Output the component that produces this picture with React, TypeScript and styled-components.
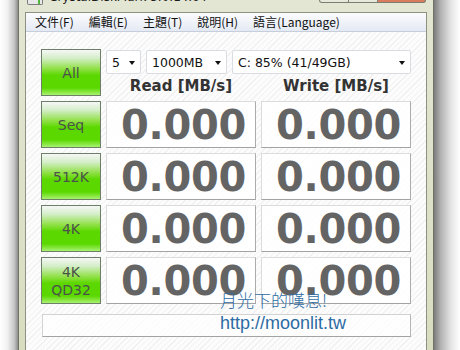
import { Fragment } from "react";
import styled, { createGlobalStyle } from "styled-components";

const GlobalStyle = createGlobalStyle`
  html, body {
    margin: 0;
    padding: 0;
    background: #ffffff;
    overflow: hidden;
  }
`;

const Screen = styled.div`
  position: relative;
  width: 460px;
  height: 350px;
  display: flex;
  overflow: hidden;
  font-family: "DejaVu Sans", sans-serif;
`;

const Shadow = styled.div<{ side: "left" | "right" }>`
  width: ${({ side }) => (side === "left" ? 18 : 26)}px;
  background: ${({ side }) =>
    side === "left"
      ? "linear-gradient(to right, #ffffff 0%, #f2f2f2 40%, #c4c4c4 80%, #8c8c8c 100%)"
      : "linear-gradient(to right, #7c7c7c 0%, #b0b0b0 25%, #e4e4e4 65%, #ffffff 100%)"};
`;

const Window = styled.div`
  width: 416px;
  box-sizing: border-box;
  border-left: 1px solid #6f7366;
  border-right: 1px solid #6f7366;
  background: linear-gradient(to bottom, #e3e6d2, #d9ddc0);
  padding: 0 6px;
  display: flex;
  flex-direction: column;
`;

const TitleBar = styled.div`
  height: 12px;
  display: flex;
  align-items: flex-start;
  overflow: hidden;
`;

const AppIcon = styled.div`
  width: 14px;
  height: 4px;
  margin-left: 2px;
  border: 1px solid #7d7d7d;
  border-top: none;
  border-radius: 0 0 2px 2px;
  background: linear-gradient(to right, #e8e8e8 70%, #4fb83a 70%, #4fb83a 85%, #e8e8e8 85%);
`;

const TitleText = styled.div`
  margin: -10px 0 0 6px;
  font-size: 12px;
  line-height: 14px;
  color: #1c1c1c;
  white-space: nowrap;
`;

const CaptionButtons = styled.div`
  margin-left: auto;
  margin-right: 1px;
  display: flex;
`;

const CaptionButton = styled.div<{ w: number; close?: boolean }>`
  width: ${({ w }) => w}px;
  height: 2px;
  border: 1px solid #7a7e70;
  border-top: none;
  margin-left: -1px;
  background: ${({ close }) => (close ? "#d97b5c" : "#e6e9da")};
  &:first-child {
    border-radius: 0 0 0 4px;
  }
  &:last-child {
    border-radius: 0 0 4px 0;
  }
`;

const Client = styled.div`
  flex: 1;
  display: flex;
  flex-direction: column;
  border: 1px solid #8c9182;
  border-bottom: none;
`;

const MenuBar = styled.div`
  height: 18px;
  display: flex;
  align-items: center;
  gap: 15px;
  padding-left: 9px;
  background: linear-gradient(to bottom, #fbfcfe, #e4e9f3);
  border-bottom: 1px solid #c7cedb;
  font-family: "Noto Sans CJK TC", "DejaVu Sans", sans-serif;
  font-size: 12px;
  color: #111;
`;

const MenuItem = styled.span`
  line-height: 18px;
  white-space: nowrap;
`;

const Content = styled.div`
  flex: 1;
  padding: 17px 0 0 15px;
  background: repeating-linear-gradient(
    135deg,
    #fcfcfc 0px,
    #fcfcfc 3px,
    #f1f1f1 3px,
    #f1f1f1 4px
  );
`;

const Board = styled.div`
  display: grid;
  grid-template-columns: 60px 150px 150px;
  grid-template-rows: repeat(5, 47px) 28px;
  column-gap: 5px;
  row-gap: 5px;
`;

const TestButton = styled.div`
  box-sizing: border-box;
  border: 1px solid #6e7f69;
  background: linear-gradient(
    to bottom,
    #f6f7f6 0%,
    #d4eec8 18%,
    #8fe045 42%,
    #5cd800 56%,
    #5ad800 84%,
    #a8f270 100%
  );
  display: flex;
  align-items: center;
  justify-content: center;
  text-align: center;
  font-size: 14px;
  line-height: 18px;
  color: #4a524a;
`;

const TopPanel = styled.div`
  grid-column: 2 / 4;
  display: flex;
  flex-direction: column;
`;

const SelectRow = styled.div`
  display: flex;
  gap: 5px;
  margin-top: 1px;
`;

const Select = styled.div<{ w: number }>`
  width: ${({ w }) => w}px;
  height: 24px;
  box-sizing: border-box;
  background: #ffffff;
  border: 1px solid #d9dde2;
  border-radius: 2px;
  display: flex;
  align-items: center;
  justify-content: space-between;
  padding: 0 5px 0 5px;
  font-size: 12.5px;
  color: #111;
  white-space: nowrap;
`;

const Arrow = styled.span`
  width: 0;
  height: 0;
  border-left: 3.5px solid transparent;
  border-right: 3.5px solid transparent;
  border-top: 4px solid #111;
  margin-top: 1px;
`;

const HeaderRow = styled.div`
  flex: 1;
  display: grid;
  grid-template-columns: 150px 150px;
  column-gap: 5px;
  align-items: center;
`;

const Heading = styled.div`
  text-align: center;
  font-weight: bold;
  font-size: 15px;
  color: #333;
  padding-top: 2px;
`;

const ValueBox = styled.div`
  box-sizing: border-box;
  background: rgba(255, 255, 255, 0.85);
  border: 1px solid #dcdcdc;
  border-right-color: #ababab;
  border-bottom-color: #a3a3a3;
  display: flex;
  align-items: center;
  justify-content: flex-end;
  padding-right: 9px;
  font-weight: bold;
  font-size: 40px;
  color: #646464;
  letter-spacing: -0.3px;
`;

const CommentBox = styled.div`
  grid-column: 1 / 4;
  margin: 5px 0 0 1px;
  box-sizing: border-box;
  border: 1px solid #d2d2d2;
  border-bottom-color: #a3a3a3;
  border-right-color: #b5b5b5;
  background: rgba(255, 255, 255, 0.7);
`;

const Watermark = styled.div`
  position: absolute;
  left: 220px;
  top: 290px;
  color: #2d6ba3;
  font-family: "Liberation Sans", "Noto Sans CJK TC", sans-serif;
  pointer-events: none;
`;

const WatermarkTitle = styled.div`
  font-family: "Noto Sans CJK TC", sans-serif;
  font-weight: 300;
  font-size: 17px;
  line-height: 20px;
`;

const WatermarkUrl = styled.div`
  font-size: 18px;
  line-height: 22px;
  margin-top: 2px;
`;

const menus = ["文件(F)", "編輯(E)", "主題(T)", "說明(H)", "語言(Language)"];

const tests: { label: string[] }[] = [
  { label: ["Seq"] },
  { label: ["512K"] },
  { label: ["4K"] },
  { label: ["4K", "QD32"] },
];

export default function App() {
  return (
    <>
      <GlobalStyle />
      <Screen>
        <Shadow side="left" />
        <Window>
          <TitleBar>
            <AppIcon />
            <TitleText>CrystalDiskMark 3.0.1 x64</TitleText>
            <CaptionButtons>
              <CaptionButton w={28} />
              <CaptionButton w={28} />
              <CaptionButton w={47} close />
            </CaptionButtons>
          </TitleBar>
          <Client>
            <MenuBar>
              {menus.map((m) => (
                <MenuItem key={m}>{m}</MenuItem>
              ))}
            </MenuBar>
            <Content>
              <Board>
                <TestButton>All</TestButton>
                <TopPanel>
                  <SelectRow>
                    <Select w={35}>
                      5<Arrow />
                    </Select>
                    <Select w={81}>
                      1000MB<Arrow />
                    </Select>
                    <Select w={179}>
                      C: 85% (41/49GB)<Arrow />
                    </Select>
                  </SelectRow>
                  <HeaderRow>
                    <Heading>Read [MB/s]</Heading>
                    <Heading>Write [MB/s]</Heading>
                  </HeaderRow>
                </TopPanel>
                {tests.map((t) => (
                  <Fragment key={t.label.join("")}>
                    <TestButton>
                      <div>
                        {t.label.map((l) => (
                          <div key={l}>{l}</div>
                        ))}
                      </div>
                    </TestButton>
                    <ValueBox>0.000</ValueBox>
                    <ValueBox>0.000</ValueBox>
                  </Fragment>
                ))}
                <CommentBox />
              </Board>
            </Content>
          </Client>
        </Window>
        <Shadow side="right" />
        <Watermark>
          <WatermarkTitle>月光下的嘆息!</WatermarkTitle>
          <WatermarkUrl>http://moonlit.tw</WatermarkUrl>
        </Watermark>
      </Screen>
    </>
  );
}
